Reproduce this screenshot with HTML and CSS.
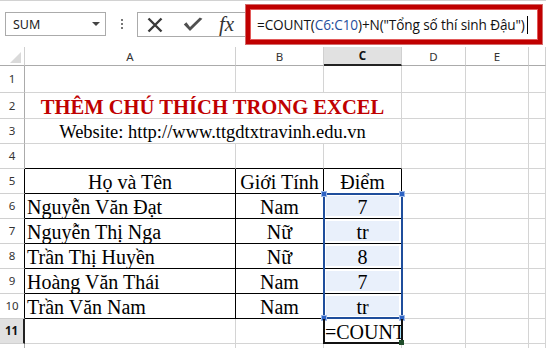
FILE: index.html
```html
<!DOCTYPE html>
<html>
<head>
<meta charset="utf-8">
<link rel="stylesheet" href="styles.css">
</head>
<body>
<div class="app">
  <div class="toolbar">
    <div class="namebox">
      <span class="name">SUM</span>
      <span class="caret"></span>
    </div>
    <div class="dots"><i></i><i></i><i></i></div>
    <div class="fxbox">
      <svg class="ico-x" width="16" height="16" viewBox="0 0 16 16"><path d="M1.5 1.5 L14.5 14.5 M14.5 1.5 L1.5 14.5" stroke="#3a3a3a" stroke-width="2.4" fill="none"/></svg>
      <svg class="ico-check" width="20" height="15" viewBox="0 0 20 15"><path d="M0.8 7.6 L7 14 L19.4 1.8 L16.8 0.4 L7 10 L3.4 5.2 Z" fill="#505050"/></svg>
      <span class="fx">fx</span>
    </div>
    <div class="formula">
      <span class="ftext">=COUNT(<span class="ref">C6:C10</span>)+N("Tổng số thí sinh Đậu")</span><span class="cursor"></span>
    </div>
  </div>
  <div class="sheet">
    <table class="grid">
      <colgroup>
        <col class="c-rh"><col class="c-a"><col class="c-b"><col class="c-c"><col class="c-d"><col class="c-e"><col class="c-f">
      </colgroup>
      <tr class="hdr">
        <td class="corner"><span class="tri"></span></td>
        <td class="ch">A</td><td class="ch">B</td><td class="ch ch-sel">C</td><td class="ch">D</td><td class="ch">E</td><td class="ch"></td>
      </tr>
      <tr class="r1">
        <td class="rh">1</td><td></td><td></td><td></td><td></td><td></td><td></td>
      </tr>
      <tr class="r2">
        <td class="rh">2</td><td colspan="3" class="title">THÊM CHÚ THÍCH TRONG EXCEL</td><td></td><td></td><td></td>
      </tr>
      <tr>
        <td class="rh">3</td><td colspan="3" class="web">Website: http://www.ttgdtxtravinh.edu.vn</td><td></td><td></td><td></td>
      </tr>
      <tr>
        <td class="rh">4</td><td class="bb"></td><td class="bb"></td><td class="bb"></td><td></td><td></td><td></td>
      </tr>
      <tr>
        <td class="rh rb">5</td><td class="k ctr">Họ và Tên</td><td class="k ctr">Giới Tính</td><td class="k ctr">Điểm</td><td></td><td></td><td></td>
      </tr>
      <tr>
        <td class="rh rb">6</td><td class="k">Nguyễn Văn Đạt</td><td class="k ctr">Nam</td><td class="k ctr sel">7</td><td></td><td></td><td></td>
      </tr>
      <tr>
        <td class="rh rb">7</td><td class="k">Nguyễn Thị Nga</td><td class="k ctr">Nữ</td><td class="k ctr sel">tr</td><td></td><td></td><td></td>
      </tr>
      <tr>
        <td class="rh rb">8</td><td class="k">Trần Thị Huyền</td><td class="k ctr">Nữ</td><td class="k ctr sel">8</td><td></td><td></td><td></td>
      </tr>
      <tr>
        <td class="rh rb">9</td><td class="k">Hoàng Văn Thái</td><td class="k ctr">Nam</td><td class="k ctr sel">7</td><td></td><td></td><td></td>
      </tr>
      <tr>
        <td class="rh rb">10</td><td class="k">Trần Văn Nam</td><td class="k ctr">Nam</td><td class="k ctr sel">tr</td><td></td><td></td><td></td>
      </tr>
      <tr>
        <td class="rh rh-sel">11</td><td></td><td></td><td class="edit"><span class="edit-text">=COUNT</span></td><td></td><td></td><td></td>
      </tr>
      <tr>
        <td class="rh"></td><td></td><td></td><td></td><td></td><td></td><td></td>
      </tr>
    </table>
    <div class="selbox">
      <span class="h h-tl"></span><span class="h h-tr"></span><span class="h h-bl"></span><span class="h h-br"></span>
    </div>
    <div class="active"><span class="fill"></span></div>
  </div>
</div>
</body>
</html>
```
FILE: styles.css
```css
* { box-sizing: border-box; }
html, body { margin: 0; padding: 0; }
body {
  width: 546px;
  height: 348px;
  overflow: hidden;
  background: #fff;
  font-family: "Noto Sans", "Open Sans", sans-serif;
}
.app {
  width: 546px;
  height: 348px;
  border-top: 1px solid #d2d2d2;
  overflow: hidden;
}
.toolbar {
  height: 46px;
  display: flex;
  align-items: flex-start;
  position: relative;
}
.namebox {
  margin: 11px 0 0 5px;
  width: 101px;
  height: 24px;
  border: 1px solid #ababab;
  display: flex;
  align-items: center;
  justify-content: space-between;
  padding: 0 5px 0 7px;
}
.name {
  font-size: 12.5px;
  color: #222;
}
.caret {
  width: 0;
  height: 0;
  border-left: 4px solid transparent;
  border-right: 4px solid transparent;
  border-top: 4px solid #444;
}
.dots {
  margin: 18px 0 0 15px;
  width: 2px;
  display: flex;
  flex-direction: column;
  gap: 2px;
}
.dots i {
  display: block;
  width: 2px;
  height: 2px;
  background: #777;
}
.fxbox {
  margin: 11px 0 0 14px;
  width: 109px;
  height: 25px;
  border: 1px solid #ababab;
  border-right: none;
  display: flex;
  align-items: center;
  padding-left: 9px;
}
.ico-check { margin-left: 20px; }
.fx {
  margin-left: 16px;
  font-family: "Liberation Serif", serif;
  font-style: italic;
  font-size: 21px;
  color: #333;
  margin-top: -1px;
}
.formula {
  margin-top: 4px;
  width: 296px;
  height: 39px;
  border: 4px solid #c00000;
  box-shadow: inset 0 0 0 1px #e25a5a, 0 0 0 1px #d46a6a;
  display: flex;
  align-items: center;
  padding-left: 7px;
}
.ftext {
  font-family: "Open Sans", sans-serif;
  font-size: 13.6px;
  color: #111;
  white-space: nowrap;
  letter-spacing: -0.12px;
}
.ref { color: #1f4e9c; }
.cursor {
  display: block;
  width: 1px;
  height: 18px;
  background: #000;
  margin-left: 2px;
}
.sheet {
  position: relative;
}
.grid {
  table-layout: fixed;
  border-collapse: separate;
  border-spacing: 0;
  width: 546px;
}
.c-rh { width: 25px; }
.c-a { width: 211px; }
.c-b { width: 88px; }
.c-c { width: 78px; }
.c-d { width: 64px; }
.c-e { width: 63px; }
.c-f { width: 17px; }
.grid td {
  height: 25px;
  padding: 0;
  border-right: 1px solid #d4d4d4;
  border-bottom: 1px solid #d4d4d4;
  font-family: "Liberation Serif", serif;
  font-size: 20px;
  line-height: 21px;
  vertical-align: bottom;
  white-space: nowrap;
  overflow: hidden;
  color: #000;
}
.grid tr.hdr td {
  height: 19px;
  font-family: "Noto Sans", sans-serif;
  font-size: 11.5px;
  line-height: 17px;
  vertical-align: middle;
  text-align: center;
  color: #333;
  border-right: 1px solid #d0d0d0;
  border-bottom: 1px solid #ababab;
}
.grid tr.r1 td { height: 27px; }
.grid tr.r2 td { height: 26px; }
.grid tr.hdr td.ch-sel {
  background: #e1e1e1;
  font-weight: bold;
  color: #111;
  border-bottom: 2px solid #222;
}
.corner { position: relative; }
.tri {
  position: absolute;
  right: 3px;
  bottom: 2px;
  width: 0;
  height: 0;
  border-left: 11px solid transparent;
  border-bottom: 11px solid #dadada;
}
.grid td.rh {
  font-family: "Noto Sans", sans-serif;
  font-size: 11.5px;
  line-height: 24px;
  vertical-align: middle;
  text-align: center;
  color: #333;
  border-right: 1px solid #ababab;
  border-bottom: 1px solid #d0d0d0;
}
.grid td.rb { border-right: 1px solid #000; }
.grid td.rh-sel {
  background: #e1e1e1;
  font-weight: bold;
  color: #111;
  border-right: 2px solid #222;
}
.grid td.title {
  text-align: center;
  font-weight: bold;
  font-size: 20.6px;
  color: #c00000;
  padding-right: 1px;
}
.grid td.web {
  text-align: center;
  font-size: 18.5px;
  padding-right: 1px;
}
.grid td.bb { border-bottom: 1px solid #000; }
.grid td.k {
  border-right: 1px solid #000;
  border-bottom: 1px solid #000;
  padding-left: 2px;
}
.grid td.ctr {
  text-align: center;
  padding-left: 0;
}
.grid td.sel {
  background: #e9f0fb;
  box-shadow: inset 0 0 0 2px #fff;
}
.grid td.edit {
  text-align: left;
  overflow: hidden;
}
.edit-text {
  display: block;
  padding-left: 1px;
  width: 100px;
}
.selbox {
  position: absolute;
  left: 323px;
  top: 146px;
  width: 80px;
  height: 126px;
  border: 2px solid #1f4e9c;
}
.h {
  position: absolute;
  width: 6px;
  height: 6px;
  background: #2e63c4;
  border: 1px solid #9db8e6;
}
.h-tl { left: -4px; top: -4px; }
.h-tr { right: -4px; top: -4px; }
.h-bl { left: -4px; bottom: -4px; }
.h-br { right: -4px; bottom: -4px; }
.active {
  position: absolute;
  left: 323px;
  top: 272px;
  width: 80px;
  height: 25px;
  border: 2px solid #111;
  border-top: none;
}
.fill {
  position: absolute;
  right: -3px;
  bottom: -3px;
  width: 5px;
  height: 5px;
  background: #1f4d2a;
}
```
